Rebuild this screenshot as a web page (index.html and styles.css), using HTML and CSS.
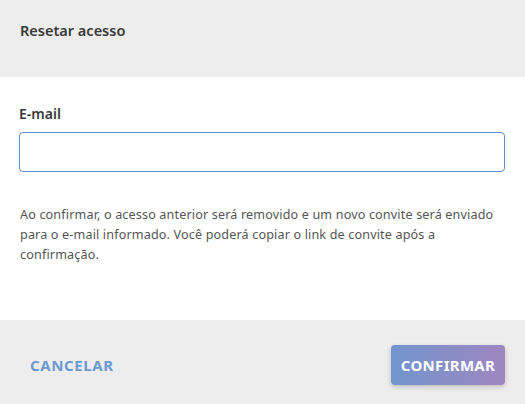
FILE: index.html
```html
<!DOCTYPE html>
<html lang="pt-BR">
<head>
    <meta charset="UTF-8"/>
    <meta name="viewport" content="width=device-width, initial-scale=1.0"/>
    <title>Resetar acesso</title>
    <link rel="stylesheet" href="styles.css">
</head>
<body>
<div class="dialog">
    <div class="dialog-header">
        <h2>Resetar acesso</h2>
    </div>
    <div class="dialog-body">
        <label class="field-label" for="email">E-mail</label>
        <input id="email" type="email" class="field-input">
        <p class="hint">Ao confirmar, o acesso anterior será removido e um novo convite será enviado para o e-mail informado. Você poderá copiar o link de convite após a confirmação.</p>
    </div>
    <div class="dialog-footer">
        <button type="button" class="btn-text">CANCELAR</button>
        <button type="button" class="btn-primary">CONFIRMAR</button>
    </div>
</div>
</body>
</html>
```

FILE: styles.css
```css
/* 页面基础 */
body {
    margin: 0;
    font-family: "Noto Sans", "Open Sans", sans-serif;
    color: #333;
}

.dialog {
    width: 525px;
    height: 404px;
    display: flex;
    flex-direction: column;
}

/* 头部 */
.dialog-header {
    height: 77px;
    background-color: #ededed;
    padding: 0 20px;
    display: flex;
    align-items: center;
}

.dialog-header h2 {
    margin: 0 0 18px;
    font-size: 14.5px;
    font-weight: 600;
    color: #3a3a3a;
}

/* 内容 */
.dialog-body {
    flex: 1;
    background-color: #fff;
    padding: 27px 20px 0 19px;
}

.field-label {
    display: block;
    font-size: 14px;
    font-weight: 600;
    color: #3a3a3a;
    margin-bottom: 9px;
}

.field-input {
    box-sizing: border-box;
    display: block;
    width: 486px;
    height: 40px;
    border: 1px solid #5b8fcf;
    border-radius: 4px;
    outline: none;
}

.hint {
    margin: 33px 0 0 1px;
    font-size: 12.6px;
    letter-spacing: 0.15px;
    line-height: 20px;
    color: #555;
}

/* 底部按钮 */
.dialog-footer {
    height: 84px;
    box-sizing: border-box;
    background-color: #ededed;
    display: flex;
    justify-content: space-between;
    align-items: center;
    padding: 6px 20px 0 20px;
}

.btn-text {
    background: none;
    border: none;
    padding: 8px 10px;
    font-family: inherit;
    font-size: 15px;
    font-weight: 700;
    letter-spacing: 0.6px;
    color: #6a9ad2;
    cursor: pointer;
}

.btn-primary {
    width: 114px;
    height: 40px;
    border: none;
    border-radius: 4px;
    background: linear-gradient(to right, #7295cd, #9f86c0);
    box-shadow: 0 2px 5px rgba(0, 0, 0, 0.2);
    color: #fff;
    font-family: inherit;
    font-size: 15px;
    font-weight: 700;
    letter-spacing: 0.3px;
    cursor: pointer;
}
```
